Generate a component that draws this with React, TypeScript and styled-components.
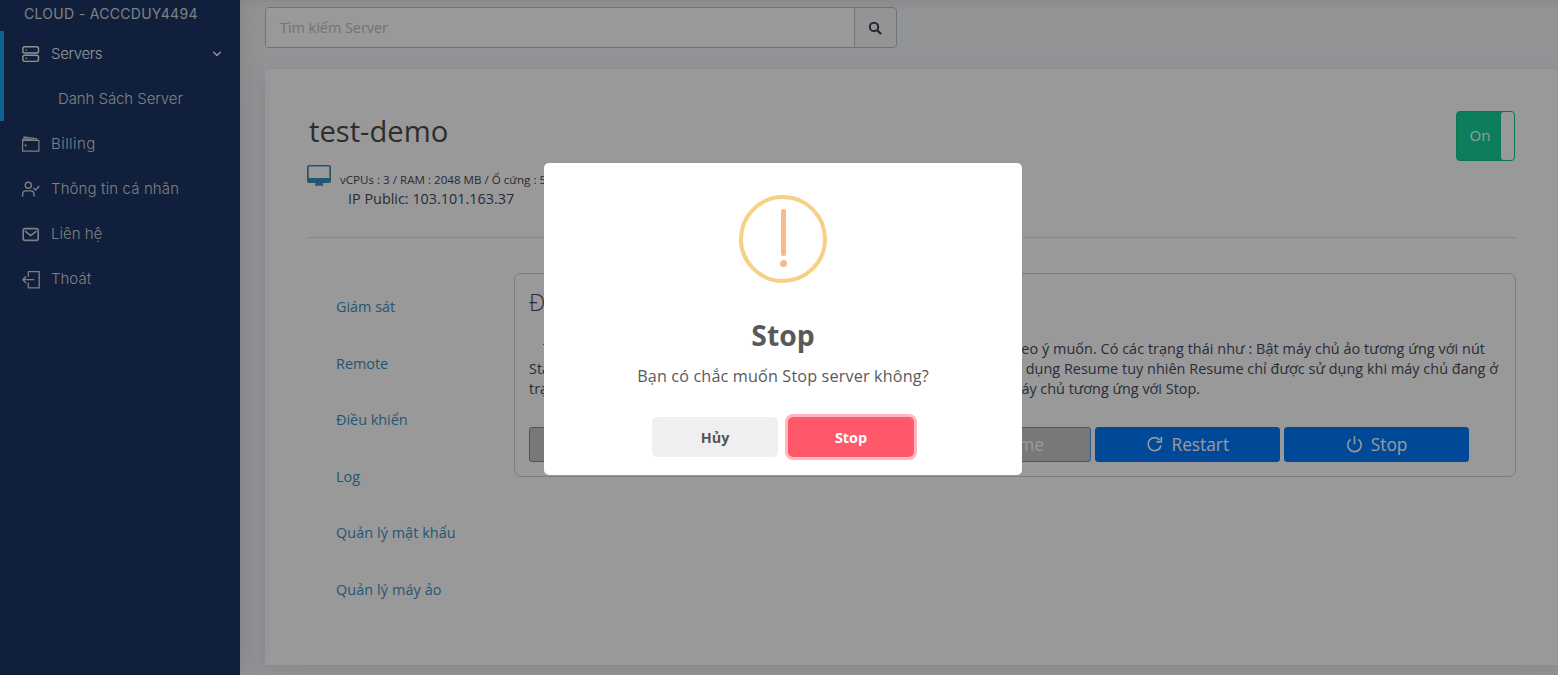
import React from 'react';
import styled, { createGlobalStyle } from 'styled-components';

const uiFont = `'Open Sans', 'Noto Sans', sans-serif`;
const menuFont = `Inter, 'Noto Sans', sans-serif`;

const Global = createGlobalStyle`
  *, *::before, *::after { box-sizing: border-box; }
  body { margin: 0; background: #f5f7fa; overflow: hidden; font-family: ${uiFont}; }
`;

const Page = styled.div`
  display: flex;
  width: 100vw;
  height: 100vh;
  overflow: hidden;
`;

const Sidebar = styled.nav`
  flex: 0 0 240px;
  z-index: 1;
  display: flex;
  flex-direction: column;
  background: #1c3565;
  box-shadow: 1px 0 30px rgba(0, 0, 0, 0.12);
  font-family: ${menuFont};
  color: #d4d6db;
`;

const Account = styled.div`
  height: 31px;
  padding: 4px 0 0 24px;
  font-size: 14px;
  letter-spacing: 0.3px;
  line-height: 20px;
  white-space: nowrap;
  font-weight: 400;
`;

const ActiveGroup = styled.div`
  border-left: 4px solid #1e9ff2;
  & > * { margin-left: -4px; }
`;

const MenuItem = styled.div<{ $bright?: boolean }>`
  display: flex;
  align-items: center;
  height: 45px;
  padding: 0 17px 0 21px;
  font-size: 15px;
  font-weight: 300;
  color: ${(p) => (p.$bright ? '#f4f4f4' : '#d2d4d9')};
  svg { flex: none; }
`;

const MenuLabel = styled.span<{ $track?: number; $lift?: number }>`
  flex: 1;
  margin-left: 10px;
  padding-bottom: ${(p) => p.$lift ?? 0}px;
  white-space: nowrap;
  letter-spacing: ${(p) => p.$track ?? 0}px;
`;

const SubItem = styled.div`
  height: 45px;
  padding-left: 58px;
  line-height: 45px;
  font-size: 15px;
  letter-spacing: -0.08px;
  font-weight: 300;
`;

const Main = styled.main`
  flex: 1;
  min-width: 0;
  padding: 7px 0 0 25px;
  box-shadow: inset 0 12px 14px -10px rgba(0, 0, 0, 0.1);
`;

const Search = styled.div`
  display: flex;
  width: 632px;
  height: 41px;
  border: 1px solid #babfc7;
  border-radius: 4px;
  overflow: hidden;
`;

const SearchField = styled.div`
  flex: 1;
  padding-left: 14px;
  line-height: 39px;
  background: #fff;
  font-size: 14.4px;
  color: #bcc0c6;
`;

const SearchButton = styled.div`
  display: grid;
  place-items: center;
  width: 42px;
  padding-right: 2px;
  border-left: 1px solid #babfc7;
`;

const Card = styled.section`
  height: 596px;
  margin-top: 21px;
  padding: 42px 42px 0;
  background: #fff;
  box-shadow: 0 10px 40px rgba(62, 57, 107, 0.07), 0 2px 9px rgba(62, 57, 107, 0.06);
`;

const CardHead = styled.header`
  display: flex;
  justify-content: space-between;
  width: 1209px;
  height: 127px;
  border-bottom: 1px solid #e2e2e2;
`;

const ServerName = styled.h2`
  margin: 0 0 0 2px;
  font-size: 29.2px;
  line-height: 41px;
  font-weight: 400;
  color: #4b4b4b;
`;

const Specs = styled.div`
  display: flex;
  margin-top: 13px;
`;

const SpecLines = styled.div`
  margin: 6px 0 0 9px;
  color: #454a5e;
  white-space: nowrap;
`;

const SpecSmall = styled.div`
  font-size: 11.6px;
  line-height: 18px;
`;

const SpecIp = styled.div`
  margin-left: 8px;
  font-size: 14.4px;
  line-height: 20px;
`;

const Toggle = styled.div`
  display: flex;
  width: 59px;
  height: 50px;
  margin-right: 1px;
  border: 1px solid #10c888;
  border-radius: 4px;
  background: #16d39a;
`;

const ToggleText = styled.span`
  flex: 1;
  padding-left: 2px;
  text-align: center;
  line-height: 46px;
  font-size: 15px;
  color: #fff;
`;

const ToggleHandle = styled.span`
  width: 13px;
  border-radius: 3px;
  background: #fff;
`;

const CardBody = styled.div`
  display: flex;
  width: 1209px;
  padding-top: 35px;
`;

const Tabs = styled.div`
  width: 207px;
  padding: 6px 0 0 29px;
`;

const Tab = styled.div<{ $track?: number }>`
  height: 56.6px;
  line-height: 56.6px;
  font-size: 14.4px;
  letter-spacing: ${(p) => p.$track ?? 0}px;
  color: #3d8fc0;
  white-space: nowrap;
`;

const Panel = styled.div`
  flex: 1;
  height: 204px;
  padding: 13px 14px 0;
  border: 1px solid #cfd0d6;
  border-radius: 7px;
  color: #454a5e;
`;

const PanelTitle = styled.h3`
  margin: 0 0 21px;
  font-size: 23px;
  line-height: 31px;
  font-weight: 300;
`;

const TextLine = styled.div<{ $width: number; $indent?: number; $track?: number }>`
  display: flex;
  justify-content: space-between;
  width: ${(p) => p.$width}px;
  padding-left: ${(p) => p.$indent ?? 0}px;
  font-size: 14.4px;
  line-height: 20px;
  white-space: nowrap;
  letter-spacing: ${(p) => p.$track ?? 0}px;
`;

const Actions = styled.div`
  display: flex;
  gap: 4px;
  margin-top: 28px;
`;

const Action = styled.div<{ $disabled?: boolean }>`
  display: flex;
  align-items: center;
  justify-content: center;
  gap: 8px;
  flex: 0 0 184.8px;
  height: 35px;
  padding-bottom: 1px;
  border-radius: 3px;
  border: 1px solid ${(p) => (p.$disabled ? '#4d9bea' : '#007bff')};
  background: ${(p) => (p.$disabled ? '#c8c8c8' : '#007bff')};
  font-size: 17.3px;
  color: #fff;
`;

const Overlay = styled.div`
  position: fixed;
  inset: 0;
  z-index: 10;
  display: flex;
  align-items: flex-start;
  padding: 163px 0 0 544px;
  background: rgba(0, 0, 0, 0.4);
`;

const Modal = styled.div`
  display: flex;
  flex-direction: column;
  align-items: center;
  width: 478px;
  height: 312px;
  padding-top: 32px;
  border-radius: 5px;
  background: #fff;
`;

const Warning = styled.div`
  display: flex;
  flex-direction: column;
  align-items: center;
  gap: 4px;
  width: 88px;
  height: 88px;
  padding: 10px 0 0 1px;
  border: 4px solid #f9ce86;
  border-radius: 50%;
`;

const WarningBar = styled.i`
  width: 5px;
  height: 47px;
  border-radius: 2px;
  background: #f8bb86;
`;

const WarningDot = styled.i`
  width: 7px;
  height: 7px;
  border-radius: 50%;
  background: #f8bb86;
`;

const ModalTitle = styled.div`
  margin-top: 33px;
  font-size: 28.3px;
  line-height: 38px;
  font-weight: 700;
  color: #595959;
`;

const ModalText = styled.div`
  margin-top: 12px;
  font-size: 16.2px;
  letter-spacing: 0.15px;
  line-height: 20px;
  color: #595959;
`;

const ModalButtons = styled.div`
  display: flex;
  gap: 10px;
  margin-top: 31px;
`;

const ModalButton = styled.div<{ $danger?: boolean }>`
  width: 126px;
  height: 40px;
  border-radius: 5px;
  text-align: center;
  line-height: 41px;
  font-size: 14.4px;
  font-weight: 700;
  color: ${(p) => (p.$danger ? '#fff' : '#555')};
  background: ${(p) => (p.$danger ? '#ff586b' : '#efefef')};
  box-shadow: ${(p) => (p.$danger ? '0 0 0 3px #ffb6bf' : 'none')};
`;

const line = { fill: 'none', stroke: 'currentColor', strokeWidth: 1.4, strokeLinecap: 'round', strokeLinejoin: 'round' } as const;

const ServerIcon = () => (
  <svg width="20" height="20" viewBox="0 0 20 20" {...line}>
    <rect x="1.9" y="2.8" width="15.6" height="6.2" rx="1.8" />
    <rect x="1.9" y="11.2" width="15.6" height="6.2" rx="1.8" />
    <path d="M5.4 6v.1M5.4 14.3v.1" />
  </svg>
);
const WalletIcon = () => (
  <svg width="20" height="20" viewBox="0 0 20 20" {...line} strokeWidth={1.2}>
    <path d="M1.6 6.3h16.3v10.9H1.6zM1.6 6.3c0-.9.6-1.3 1.4-1.5V2.8l12.7 2v1.5M3 4.6l10 1.6" />
    <path d="M4.6 11.3v.2" strokeWidth="2" />
  </svg>
);
const UserIcon = () => (
  <svg width="20" height="20" viewBox="0 0 20 20" {...line}>
    <circle cx="7.3" cy="6.3" r="3.1" />
    <path d="M1.6 17v-1.6c0-2 1.4-3.5 3.3-3.5h4.8c1.9 0 3.3 1.5 3.3 3.5V17M12.8 9.3l1.8 1.7 3.2-3.4" />
  </svg>
);
const MailIcon = () => (
  <svg width="20" height="20" viewBox="0 0 20 20" {...line} strokeWidth={1.6}>
    <rect x="2.2" y="4.6" width="15" height="11.8" rx="1.8" />
    <path d="M4.4 7.4l5.300 4.200 5.300-4.200" />
  </svg>
);
const ExitIcon = () => (
  <svg width="20" height="20" viewBox="0 0 20 20" {...line} strokeWidth={1.3}>
    <path d="M7.3 7.2V2.6h10.900v16.200H7.300v-4.600M12.600 10.700H1.800M4.800 7.700l-3 3 3 3" />
  </svg>
);
const Chevron = () => (
  <svg width="12" height="12" viewBox="0 0 12 12" {...line}>
    <path d="M2.700 4.300L6 7.500l3.300-3.200" />
  </svg>
);
const SearchIcon = () => (
  <svg width="14" height="14" viewBox="0 0 14 14" fill="none" stroke="#40414a" strokeWidth="2">
    <circle cx="6" cy="5.900" r="4.200" />
    <path d="M9 9l4 4" strokeWidth="2.400" />
  </svg>
);
const MonitorIcon = () => (
  <svg width="24" height="21" viewBox="0 0 24 21" fill="#3d8fc0">
    <path fillRule="evenodd" d="M1.8 0h20.4A1.8 1.8 0 0 1 24 1.8v14.4a1.8 1.8 0 0 1-1.8 1.8h-6.4v1.3h.4v1.5H8v-1.5h.5V18H1.8A1.8 1.8 0 0 1 0 16.2V1.8A1.8 1.8 0 0 1 1.8 0zM1.7 1.5v11.500h20.600V1.500z" />
  </svg>
);
const RestartIcon = () => (
  <svg width="17" height="17" viewBox="0 0 17 17" fill="none" stroke="#fff" strokeWidth="1.7">
    <path d="M13.700 4A6.500 6.500 0 1 0 15 9.500M15.300 1v4.800h-4.800" />
  </svg>
);
const PowerIcon = () => (
  <svg width="17" height="17" viewBox="0 0 17 17" fill="none" stroke="#fff" strokeWidth="1.6">
    <path d="M4.700 3.400a6.700 6.700 0 1 0 7.600 0M8.500 .3v8" />
  </svg>
);

export default function App() {
  return (
    <Page>
      <Global />
      <Sidebar>
        <Account>CLOUD - ACCCDUY4494</Account>
        <ActiveGroup>
          <MenuItem $bright>
            <ServerIcon />
            <MenuLabel $track={-0.35} $lift={1}>Servers</MenuLabel>
            <Chevron />
          </MenuItem>
          <SubItem>Danh Sách Server</SubItem>
        </ActiveGroup>
        <MenuItem><WalletIcon /><MenuLabel $track={0.45}>Billing</MenuLabel></MenuItem>
        <MenuItem><UserIcon /><MenuLabel $track={0.12}>Thông tin cá nhân</MenuLabel></MenuItem>
        <MenuItem><MailIcon /><MenuLabel>Liên hệ</MenuLabel></MenuItem>
        <MenuItem><ExitIcon /><MenuLabel>Thoát</MenuLabel></MenuItem>
      </Sidebar>
      <Main>
        <Search>
          <SearchField>Tìm kiếm Server</SearchField>
          <SearchButton><SearchIcon /></SearchButton>
        </Search>
        <Card>
          <CardHead>
            <div>
              <ServerName>test-demo</ServerName>
              <Specs>
                <MonitorIcon />
                <SpecLines>
                  <SpecSmall>vCPUs : 3 / RAM : 2048 MB / Ổ cứng : 50 GB</SpecSmall>
                  <SpecIp>IP Public: 103.101.163.37</SpecIp>
                </SpecLines>
              </Specs>
            </div>
            <Toggle><ToggleText>On</ToggleText><ToggleHandle /></Toggle>
          </CardHead>
          <CardBody>
            <Tabs>
              <Tab>Giám sát</Tab>
              <Tab>Remote</Tab>
              <Tab>Điều khiển</Tab>
              <Tab>Log</Tab>
              <Tab $track={0.07}>Quản lý mật khẩu</Tab>
              <Tab $track={0.1}>Quản lý máy ảo</Tab>
            </Tabs>
            <Panel>
              <PanelTitle>Điều khiển</PanelTitle>
              <TextLine $width={956} $indent={14} $track={0.06}>
                <span>Tại đây bạn có thể</span>
                <span>theo ý muốn. Có các trạng thái như : Bật máy chủ ảo tương ứng với nút</span>
              </TextLine>
              <TextLine $width={969} $track={0.04}>
                <span>Start, tạm dừng</span>
                <span>sử dụng Resume tuy nhiên Resume chỉ được sử dụng khi máy chủ đang ở</span>
              </TextLine>
              <TextLine $width={671}>
                <span>trạng thái Suspend</span>
                <span>máy chủ tương ứng với Stop.</span>
              </TextLine>
              <Actions>
                <Action $disabled>Start</Action>
                <Action $disabled>Suspend</Action>
                <Action $disabled><RestartIcon />Resume</Action>
                <Action><RestartIcon />Restart</Action>
                <Action><PowerIcon />Stop</Action>
              </Actions>
            </Panel>
          </CardBody>
        </Card>
      </Main>
      <Overlay>
        <Modal>
          <Warning><WarningBar /><WarningDot /></Warning>
          <ModalTitle>Stop</ModalTitle>
          <ModalText>Bạn có chắc muốn Stop server không?</ModalText>
          <ModalButtons>
            <ModalButton>Hủy</ModalButton>
            <ModalButton $danger>Stop</ModalButton>
          </ModalButtons>
        </Modal>
      </Overlay>
    </Page>
  );
}
